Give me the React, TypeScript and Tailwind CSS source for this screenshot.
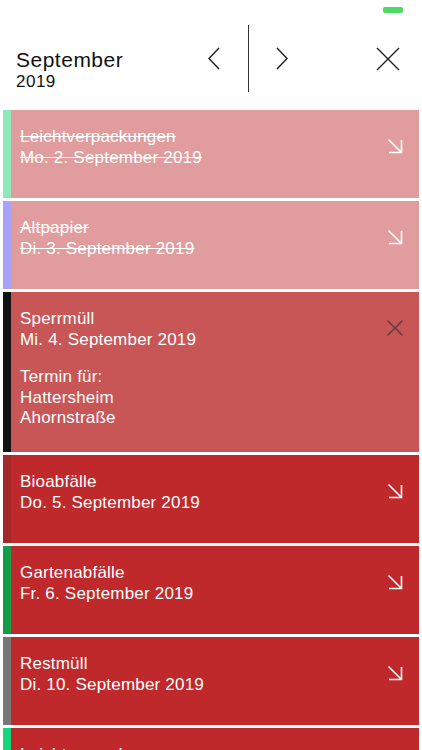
import React from 'react';

type Entry = {
  title: string;
  date: string;
  strip: string;
  bg: string;
  done?: boolean;
  open?: boolean;
  extra?: string[];
};

const entries: Entry[] = [
  { title: 'Leichtverpackungen', date: 'Mo. 2. September 2019', strip: 'bg-[#8ee8bb]', bg: 'bg-[#e19c9d]', done: true },
  { title: 'Altpapier', date: 'Di. 3. September 2019', strip: 'bg-[#a7a1f7]', bg: 'bg-[#e19c9d]', done: true },
  {
    title: 'Sperrmüll',
    date: 'Mi. 4. September 2019',
    strip: 'bg-[#111111]',
    bg: 'bg-[#c95656]',
    open: true,
    extra: ['Termin für:', 'Hattersheim', 'Ahornstraße'],
  },
  { title: 'Bioabfälle', date: 'Do. 5. September 2019', strip: 'bg-[#a5282b]', bg: 'bg-[#bf292b]' },
  { title: 'Gartenabfälle', date: 'Fr. 6. September 2019', strip: 'bg-[#169c48]', bg: 'bg-[#bf292b]' },
  { title: 'Restmüll', date: 'Di. 10. September 2019', strip: 'bg-[#777777]', bg: 'bg-[#bf292b]' },
  { title: 'Leichtverpackungen', date: 'Mi. 11. September 2019', strip: 'bg-[#14d67a]', bg: 'bg-[#bf292b]' },
];

function ArrowIcon() {
  return (
    <svg width="16" height="16" viewBox="0 0 16 16" fill="none" stroke="white" strokeWidth="1.6">
      <path d="M1.5 1.5 L14.5 14.5 M14.5 2 V14.5 H2" />
    </svg>
  );
}

function CloseIcon({ size, color, width }: { size: number; color: string; width: number }) {
  return (
    <svg width={size} height={size} viewBox="0 0 24 24" fill="none" stroke={color} strokeWidth={width}>
      <path d="M1 1 L23 23 M23 1 L1 23" />
    </svg>
  );
}

function Card({ e }: { e: Entry }) {
  return (
    <div className={`flex ${e.open ? 'h-[160px]' : 'h-[88px]'} ${e.bg} shrink-0`}>
      <div className={`w-[8px] ${e.strip}`} />
      <div className="flex-1 pl-[9px] pt-[17px] text-[17px] leading-[20.5px] tracking-[0.2px] text-white">
        <div className={e.done ? 'line-through' : ''}>{e.title}</div>
        <div className={e.done ? 'line-through' : ''}>{e.date}</div>
        {e.extra && (
          <div className="mt-[17px]">
            {e.extra.map((l) => (
              <div key={l}>{l}</div>
            ))}
          </div>
        )}
      </div>
      <div className="mt-[28px] mr-[16px]">
        {e.open ? <CloseIcon size={16} color="#5e3b3b" width={2} /> : <ArrowIcon />}
      </div>
    </div>
  );
}

export default function App() {
  return (
    <div className="h-[750px] overflow-hidden bg-white font-['Liberation_Sans',Arial,sans-serif]">
      {/* status bar */}
      <div className="flex h-[25px] justify-end pt-[7px] pr-[19px]">
        <div className="h-[6px] w-[20px] rounded-[2px] bg-[#4cd964]" />
      </div>

      {/* header */}
      <div className="flex h-[67px] items-stretch">
        <div className="flex-1 pl-[16px] pt-[23px] text-[#111]">
          <div className="text-[21px] leading-[24px] tracking-[0.5px]">September</div>
          <div className="text-[17px] leading-[20px] tracking-[0.5px]">2019</div>
        </div>
        <button className="flex w-[40px] items-center justify-center">
          <svg width="12" height="23" viewBox="0 0 12 23" fill="none" stroke="#222" strokeWidth="1.5">
            <path d="M11 1 L1 11.5 L11 22" />
          </svg>
        </button>
        <div className="ml-[14px] w-[1.5px] bg-[#333]" />
        <button className="ml-[13px] flex w-[40px] items-center justify-center">
          <svg width="12" height="23" viewBox="0 0 12 23" fill="none" stroke="#222" strokeWidth="1.5">
            <path d="M1 1 L11 11.5 L1 22" />
          </svg>
        </button>
        <button className="ml-[74px] mr-[22px] flex items-center">
          <CloseIcon size={24} color="#222" width={1.4} />
        </button>
      </div>

      <div className="h-[18px]" />

      {/* entries */}
      <div className="flex flex-col gap-[3px] px-[3px]">
        {entries.map((e, i) => (
          <Card key={i} e={e} />
        ))}
      </div>
    </div>
  );
}
